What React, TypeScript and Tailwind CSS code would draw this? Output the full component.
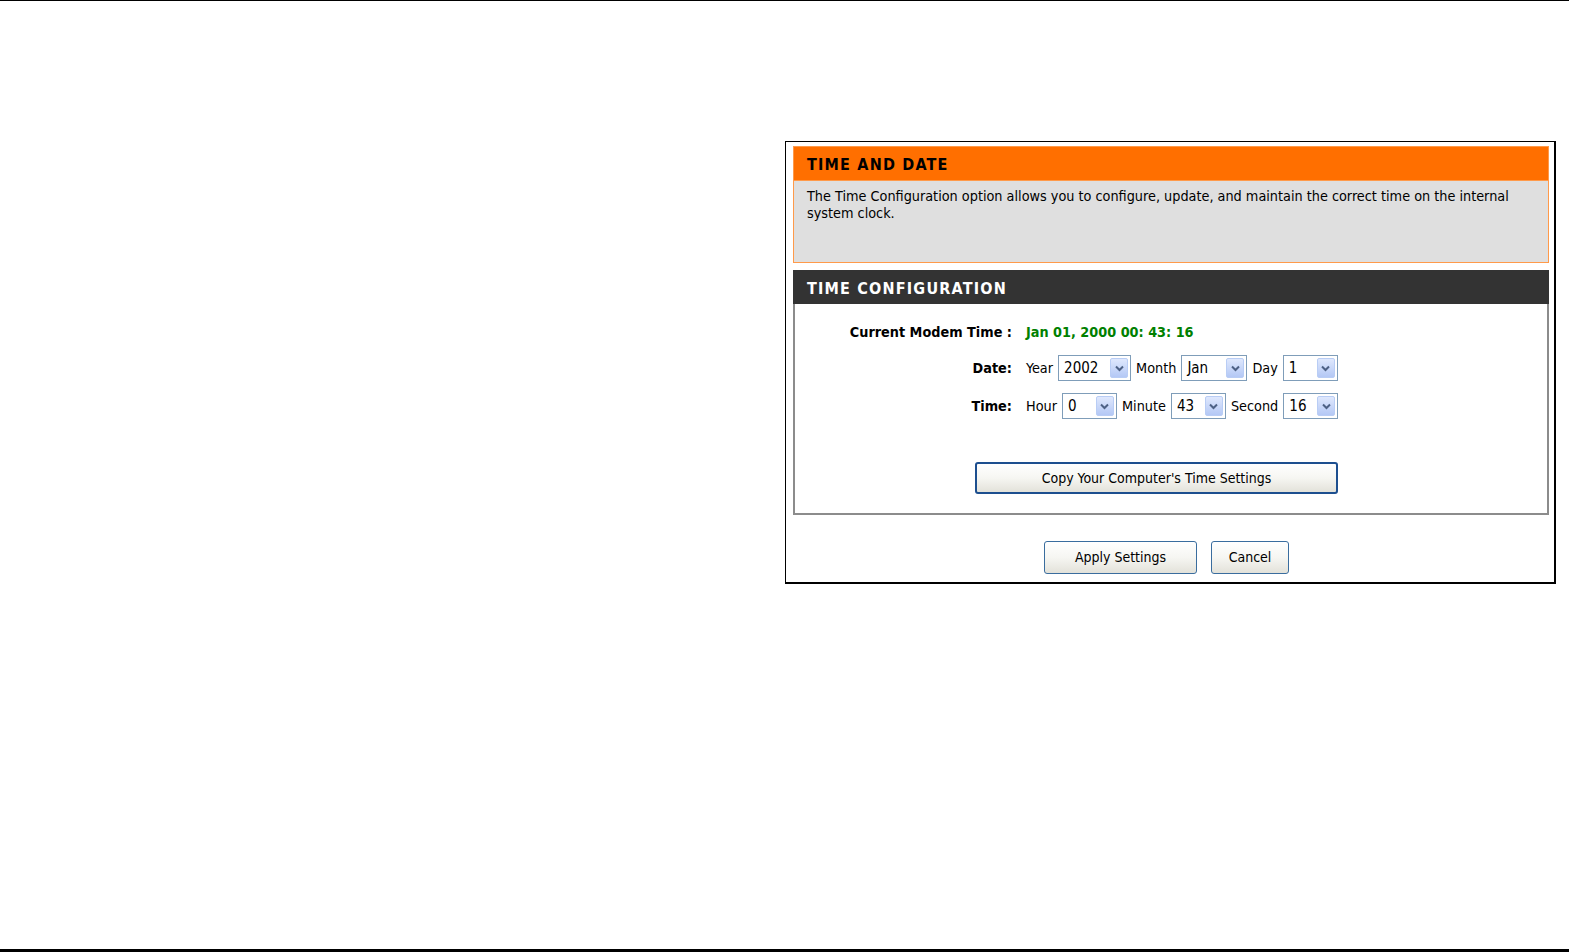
import React from 'react';

const font = { fontFamily: '"DejaVu Sans Condensed", "DejaVu Sans", "Liberation Sans", sans-serif' };

function Select({ value, width }: { value: string; width: string }) {
  return (
    <div className={`flex h-[26px] ${width} items-stretch border border-[#7f9db9] bg-white`}>
      <span className="flex-1 pl-[5px] text-[15px] leading-[24px] text-black">{value}</span>
      <span className="m-[2px] flex w-[18px] items-center justify-center rounded-[2px] border border-[#b9cdf5] bg-gradient-to-b from-[#dfe8fd] to-[#b4c8f5]">
        <svg width="9" height="7" viewBox="0 0 9 7">
          <path d="M1 1.5 L4.5 5 L8 1.5" fill="none" stroke="#4d6185" strokeWidth="2" />
        </svg>
      </span>
    </div>
  );
}

function XpButton({ children, className }: { children: React.ReactNode; className: string }) {
  return (
    <button
      className={`rounded-[3px] bg-gradient-to-b from-white via-[#f6f6f2] to-[#e3e2da] text-[14px] text-black ${className}`}
    >
      {children}
    </button>
  );
}

export default function App() {
  return (
    <div className="flex h-screen flex-col bg-white" style={font}>
      <div className="h-px w-full bg-black" />
      <div className="flex flex-1 flex-col">
        <div className="ml-[785px] mt-[140px] w-[771px] border-t border-l border-r-2 border-b-2 border-black pb-[8px] pl-[7px] pr-[5px] pt-[4px]">
          {/* Time and date */}
          <div>
            <div className="h-[35px] border border-[#ff9a4a] bg-[#ff6f00] pl-[13px] text-[16px] font-bold leading-[36px] tracking-[1.2px] text-black">
              TIME AND DATE
            </div>
            <div className="h-[82px] border border-t-0 border-[#ff9a4a] bg-[#dfdfdf] px-[13px] pt-[7px] text-[14.3px] leading-[17px] text-black">
              The Time Configuration option allows you to configure, update, and maintain the correct time on the internal
              system clock.
            </div>
          </div>

          {/* Time configuration */}
          <div className="mt-[7px]">
            <div className="h-[34px] bg-[#333333] pl-[14px] text-[16px] font-bold leading-[37px] tracking-[1.2px] text-white">
              TIME CONFIGURATION
            </div>
            <div className="h-[211px] border-2 border-t-0 border-[#8c8c8c] pt-[18px]">
              <div className="grid grid-cols-[217px_1fr] items-center gap-x-[14px] gap-y-[12px] text-[14.3px] text-black">
                <div className="text-right font-bold">Current Modem Time :</div>
                <div className="font-bold text-[#008000]">Jan 01, 2000 00: 43: 16</div>

                <div className="text-right font-bold">Date:</div>
                <div className="flex items-center gap-[5px]">
                  <span>Year</span>
                  <Select value="2002" width="w-[73px]" />
                  <span>Month</span>
                  <Select value="Jan" width="w-[66px]" />
                  <span>Day</span>
                  <Select value="1" width="w-[55px]" />
                </div>

                <div className="text-right font-bold">Time:</div>
                <div className="flex items-center gap-[5px]">
                  <span>Hour</span>
                  <Select value="0" width="w-[55px]" />
                  <span>Minute</span>
                  <Select value="43" width="w-[55px]" />
                  <span>Second</span>
                  <Select value="16" width="w-[55px]" />
                </div>
              </div>
              <div className="mt-[43px] pl-[180px]">
                <XpButton className="h-[32px] w-[363px] border-2 border-[#1d4f8f]">
                  Copy Your Computer's Time Settings
                </XpButton>
              </div>
            </div>
          </div>

          <div className="mt-[26px] flex justify-center gap-[14px] pr-[9px]">
            <XpButton className="h-[33px] w-[153px] border border-[#3a6d9e]">Apply Settings</XpButton>
            <XpButton className="h-[33px] w-[78px] border border-[#3a6d9e]">Cancel</XpButton>
          </div>
        </div>
      </div>
      <div className="h-[3px] w-full bg-black" />
    </div>
  );
}
